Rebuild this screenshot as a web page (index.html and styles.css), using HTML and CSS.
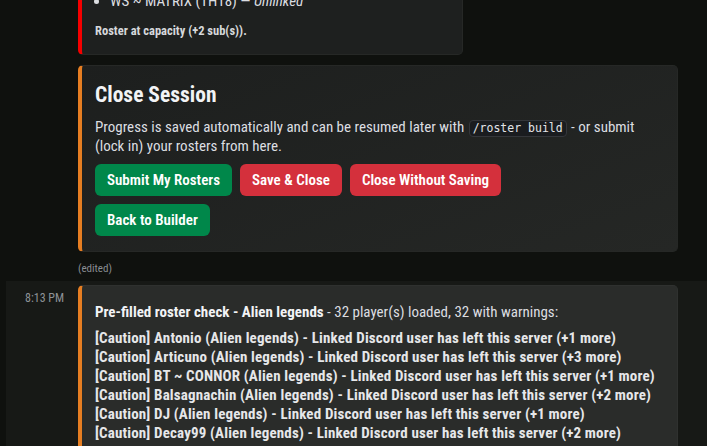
FILE: index.html
```html
<!DOCTYPE html>
<html lang="en">
<head>
    <meta charset="UTF-8">
    <meta name="viewport" content="width=device-width, initial-scale=1.0">
    <title>Roster Builder</title>
    <link rel="stylesheet" href="styles.css">
</head>
<body>
    <div class="chat">
        <div class="message">
            <div class="gutter"></div>
            <div class="content">
                <div class="embed embed-red">
                    <ul class="players">
                        <li>WS ~ MATRIX (TH18) — <em>Unlinked</em></li>
                    </ul>
                    <p class="note">Roster at capacity (+2 sub(s)).</p>
                </div>

                <div class="embed embed-orange session">
                    <h2>Close Session</h2>
                    <p class="desc">Progress is saved automatically and can be resumed later with <code>/roster build</code> - or submit (lock in) your rosters from here.</p>
                    <div class="action-row">
                        <button class="btn green">Submit My Rosters</button>
                        <button class="btn red">Save &amp; Close</button>
                        <button class="btn red">Close Without Saving</button>
                    </div>
                    <div class="action-row">
                        <button class="btn green">Back to Builder</button>
                    </div>
                </div>
                <div class="edited">(edited)</div>
            </div>
        </div>

        <div class="message hovered">
            <div class="gutter"><span class="time">8:13 PM</span></div>
            <div class="content">
                <div class="embed embed-orange check">
                    <p class="summary"><strong>Pre-filled roster check - Alien legends</strong> - 32 player(s) loaded, 32 with warnings:</p>
                    <div class="warnings">
                        <div>[Caution] Antonio (Alien legends) - Linked Discord user has left this server (+1 more)</div>
                        <div>[Caution] Articuno (Alien legends) - Linked Discord user has left this server (+3 more)</div>
                        <div>[Caution] BT ~ CONNOR (Alien legends) - Linked Discord user has left this server (+1 more)</div>
                        <div>[Caution] Balsagnachin (Alien legends) - Linked Discord user has left this server (+2 more)</div>
                        <div>[Caution] DJ (Alien legends) - Linked Discord user has left this server (+1 more)</div>
                        <div>[Caution] Decay99 (Alien legends) - Linked Discord user has left this server (+2 more)</div>
                    </div>
                </div>
            </div>
        </div>
    </div>
</body>
</html>
```
FILE: styles.css
```css
body {
    margin: 0;
    background: #0f110e;
    color: #dcdee1;
    font-family: 'Roboto', sans-serif;
    font-stretch: 75%;
    font-size: 15px;
    overflow: hidden;
    height: 446px;
}

/* list is scrolled, first embed starts above the fold */
.chat {
    margin-top: -24px;
}

.message {
    display: flex;
}

.message.hovered {
    margin-left: 6px;
    padding-top: 4px;
    background: #171916;
    height: 170px;
}

.gutter {
    width: 78px;
    flex-shrink: 0;
}

.hovered .gutter {
    width: 72px;
    padding-top: 6px;
}

.time {
    display: block;
    padding-left: 19px;
    font-size: 12px;
    line-height: 15px;
    color: #8e9297;
}

.content {
    width: 600px;
}

.embed {
    box-sizing: border-box;
    border: 1px solid #262826;
    border-left: 4px solid;
    border-radius: 5px;
    padding: 15px 15px 15px 13px;
    background: #1e201f;
}

.embed-red {
    border-left-color: #f50000;
    width: 385px;
}

.embed-orange {
    border-left-color: #e67e22;
}

.players {
    margin: 0;
    padding-left: 15px;
    line-height: 19px;
}

.players em {
    font-style: italic;
}

.note {
    margin: 12px 0 0;
    font-size: 12.5px;
    line-height: 16px;
    font-weight: bold;
    color: #d6d8db;
}

.session {
    margin-top: 10px;
    padding-top: 16px;
    background: linear-gradient(160deg, #1d1f1e, #252725);
}

.session h2 {
    margin: 0 0 10px;
    font-size: 21.5px;
    line-height: 26px;
    font-weight: bold;
    color: #f2f3f5;
}

.desc {
    margin: 0;
    line-height: 18px;
}

code {
    display: inline-block;
    font-family: 'DejaVu Sans Mono', monospace;
    font-size: 11.5px;
    line-height: 15px;
    padding: 0 3px;
    margin: 0 1px;
    background: #1a1c1f;
    border: 1px solid #34363a;
    border-radius: 4px;
    color: #e3e5e8;
}

.action-row {
    display: flex;
    gap: 8px;
    margin-top: 8px;
}

.action-row:first-of-type {
    margin-top: 9px;
}

.btn {
    height: 32px;
    padding: 0 12px;
    border: none;
    border-radius: 6px;
    font-family: 'Roboto', sans-serif;
    font-stretch: 75%;
    font-size: 15px;
    font-weight: 600;
    color: #fff;
    cursor: pointer;
}

.btn.green {
    background: #00874a;
}

.btn.red {
    background: #d4303c;
}

.edited {
    margin-top: 10px;
    font-size: 11px;
    line-height: 14px;
    color: #8a8e93;
    padding-bottom: 5px;
}

.check {
    padding-top: 17px;
    background: #2a2c2a;
    border-color: #2f312f;
    border-left-color: #e67e22;
}

.summary {
    margin: 0;
    line-height: 19px;
}

.summary strong {
    color: #f2f3f5;
}

.warnings {
    margin-top: 7px;
    line-height: 19px;
    font-weight: bold;
    letter-spacing: 0.15px;
    color: #e6e7e9;
}
```
